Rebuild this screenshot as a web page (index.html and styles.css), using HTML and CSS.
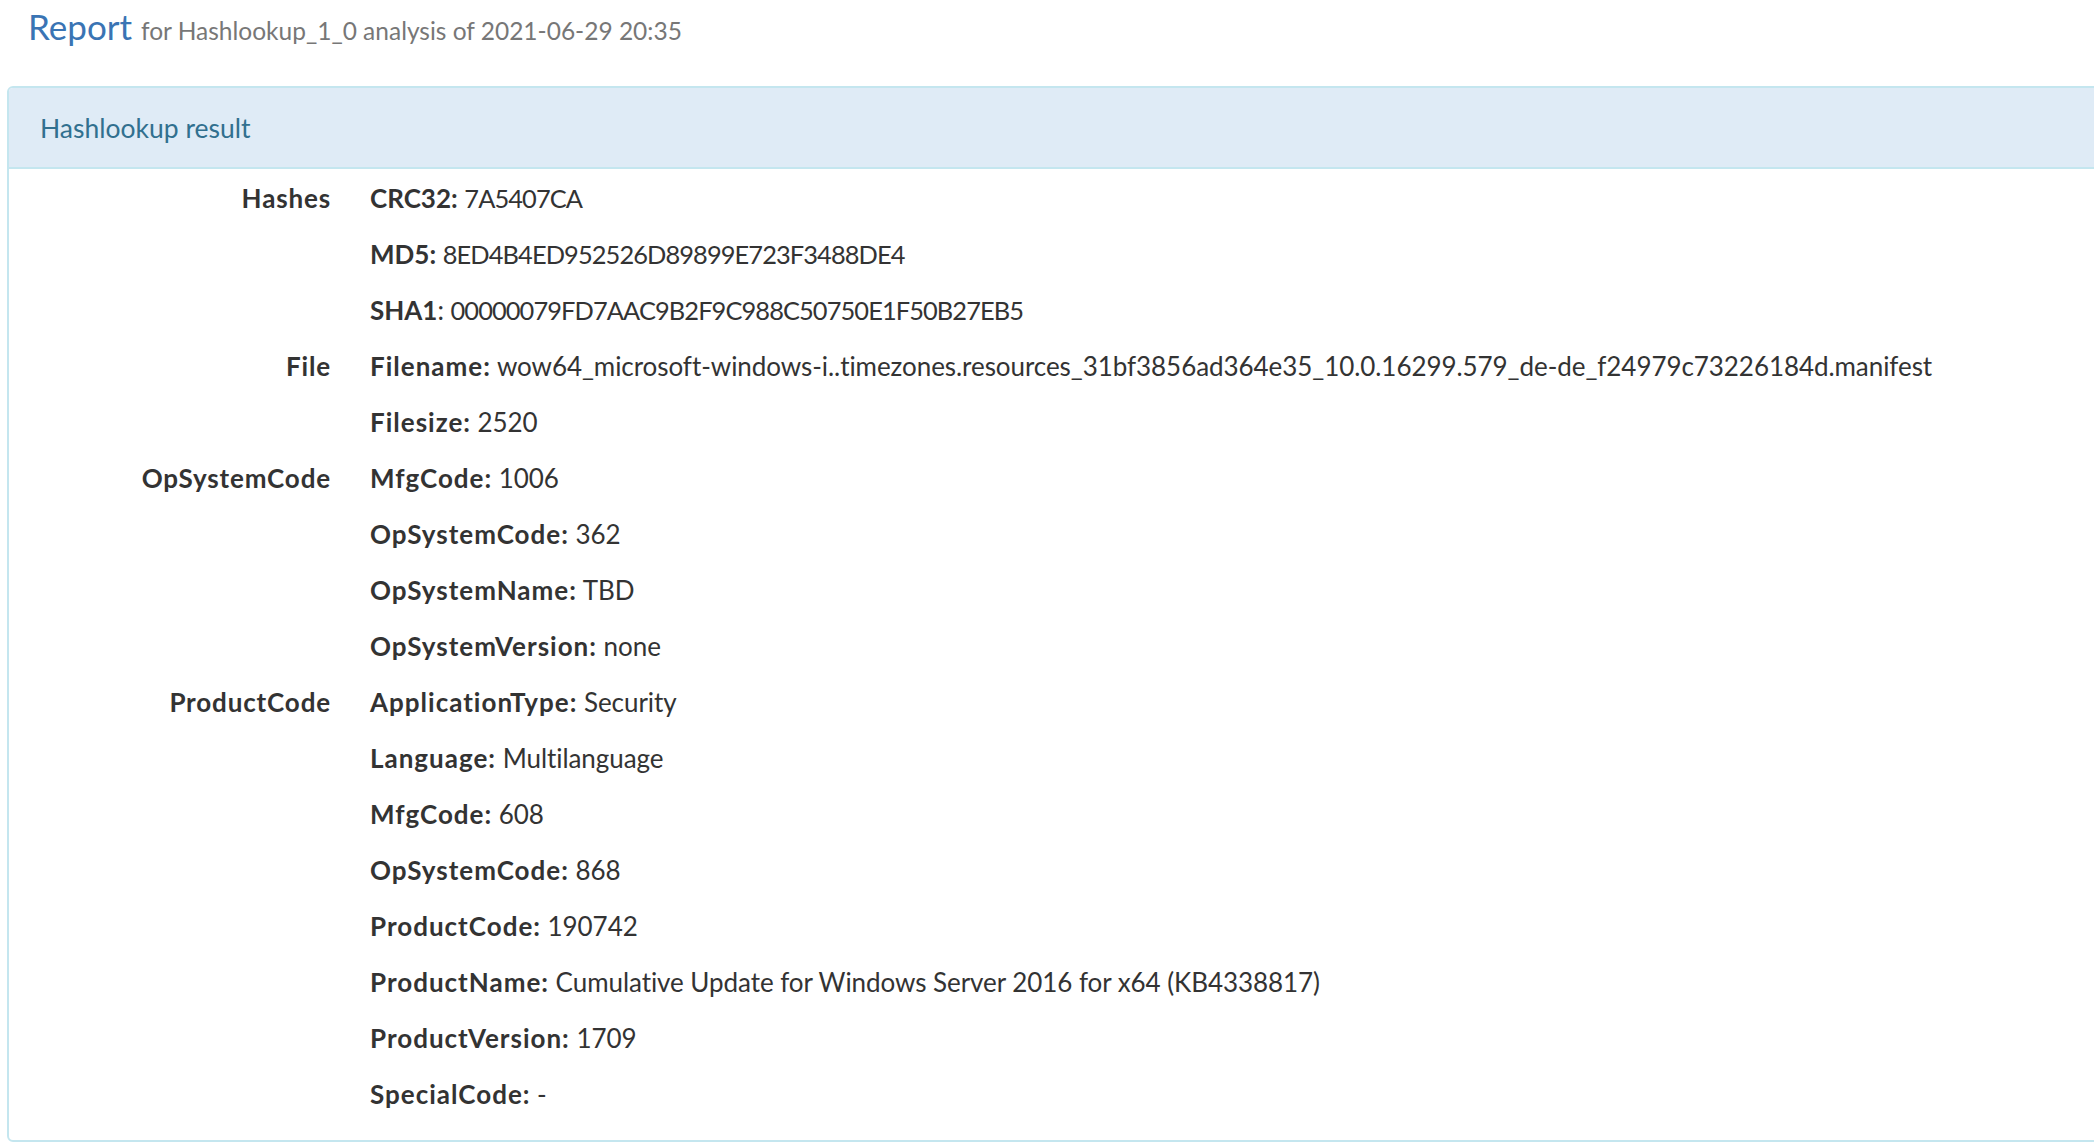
FILE: index.html
```html
<!DOCTYPE html>
<html lang="en">
<head>
<meta charset="utf-8">
<title>Report</title>
<link rel="stylesheet" href="styles.css">
</head>
<body>
<header class="page-head">
  <h1 class="title">Report <small>for Hashlookup_1_0 analysis of 2021-06-29 20:35</small></h1>
</header>
<section class="panel">
  <div class="panel-heading">Hashlookup result</div>
  <div class="panel-body">
    <dl class="kv">
      <dt>Hashes</dt><dd><b class="caps">CRC32:</b> <span class="hex">7A5407CA</span></dd>
      <dt></dt><dd><b class="caps">MD5:</b> <span class="hex">8ED4B4ED952526D89899E723F3488DE4</span></dd>
      <dt></dt><dd><b class="caps">SHA1</b>: <span class="hex">00000079FD7AAC9B2F9C988C50750E1F50B27EB5</span></dd>
      <dt>File</dt><dd><b>Filename:</b> wow64_microsoft-windows-i..timezones.resources_31bf3856ad364e35_10.0.16299.579_de-de_f24979c73226184d.manifest</dd>
      <dt></dt><dd><b>Filesize:</b> 2520</dd>
      <dt>OpSystemCode</dt><dd><b>MfgCode:</b> 1006</dd>
      <dt></dt><dd><b>OpSystemCode:</b> 362</dd>
      <dt></dt><dd><b>OpSystemName:</b> TBD</dd>
      <dt></dt><dd><b>OpSystemVersion:</b> none</dd>
      <dt>ProductCode</dt><dd><b>ApplicationType:</b> Security</dd>
      <dt></dt><dd><b>Language:</b> Multilanguage</dd>
      <dt></dt><dd><b>MfgCode:</b> 608</dd>
      <dt></dt><dd><b>OpSystemCode:</b> 868</dd>
      <dt></dt><dd><b>ProductCode:</b> 190742</dd>
      <dt></dt><dd><b>ProductName:</b> Cumulative Update for Windows Server 2016 for x64 (KB4338817)</dd>
      <dt></dt><dd><b>ProductVersion:</b> 1709</dd>
      <dt></dt><dd><b>SpecialCode:</b> -</dd>
    </dl>
  </div>
</section>
</body>
</html>
```

FILE: styles.css
```css
html, body {
  margin: 0;
  padding: 0;
  overflow: hidden;
  background: #fff;
}
body {
  font-family: Lato, "Noto Sans", sans-serif;
  color: #333;
  font-size: 26px;
}
.page-head {
  height: 86px;
  padding-left: 28px;
  box-sizing: border-box;
}
.title {
  margin: 0;
  padding-top: 1px;
  font-size: 35px;
  font-weight: 400;
  line-height: 50px;
  color: #3a74b4;
}
.title small {
  font-size: 24.5px;
  color: #777;
}
.panel {
  margin-left: 7px;
  width: calc(100% + 20px);
  border: 2px solid #c4e6ef;
  border-radius: 6px 0 0 6px;
  box-sizing: border-box;
  height: 1056px;
}
.panel-heading {
  height: 81px;
  box-sizing: border-box;
  background: #dfebf6;
  border-bottom: 2px solid #c4e6ef;
  border-radius: 4px 0 0 0;
  color: #31708f;
  font-size: 26.5px;
  line-height: 80px;
  padding-left: 31px;
}
.panel-body {
  padding: 1px 0 15px 0;
}
.kv {
  margin: 0;
  display: grid;
  grid-template-columns: 322px 1fr;
  column-gap: 39px;
}
.kv dt, .kv dd {
  margin: 0;
  height: 56px;
  line-height: 56px;
  white-space: nowrap;
}
.kv dd {
  letter-spacing: -0.06px;
}
.kv dt {
  text-align: right;
  font-weight: 700;
  letter-spacing: 0.85px;
}
.kv b {
  font-weight: 700;
  letter-spacing: 1px;
}
.kv b.caps {
  letter-spacing: 0;
}
.hex {
  font-size: 25.4px;
  letter-spacing: -0.9px;
}
```
